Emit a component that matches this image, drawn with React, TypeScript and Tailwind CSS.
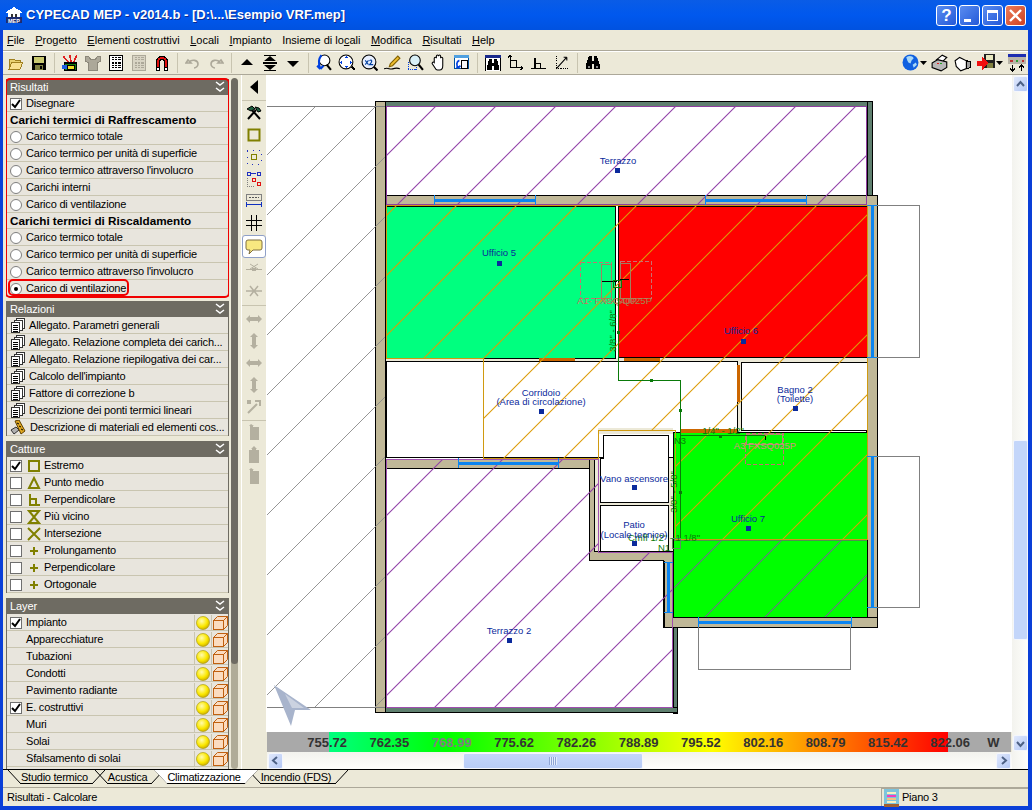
import type { ReactNode } from "react";

const FONT = "font-['Liberation_Sans',Arial,sans-serif]";

// 16x16 pixel-ish icon wrapper
const Ic = ({ children, size = 16, className = "" }: { children: ReactNode; size?: number; className?: string }) => (
  <svg width={size} height={size} viewBox="0 0 16 16" className={className} shapeRendering="crispEdges">
    {children}
  </svg>
);

const Folder = () => (
  <Ic>
    <path d="M1 4h5l1 1h5v2H4L1 13z" fill="#e8d070" stroke="#a08020" />
    <path d="M1 14l3-7h11l-3 7z" fill="#f8e090" stroke="#a08020" />
  </Ic>
);
const Save = () => (
  <Ic>
    <rect x="1" y="1" width="14" height="14" fill="#000" />
    <rect x="3" y="2" width="10" height="6" fill="#c8c870" />
    <rect x="4" y="10" width="8" height="5" fill="#808040" />
    <rect x="9" y="11" width="2" height="3" fill="#000" />
  </Ic>
);
const ToolSet = () => (
  <Ic size={18}>
    <path d="M2 2l5 6M8 1l1 7M14 1l-3 7" stroke="#e02020" strokeWidth="1.5" />
    <rect x="3" y="8" width="11" height="7" fill="#108010" stroke="#000" />
    <rect x="6" y="10" width="6" height="4" fill="#f0e020" stroke="#000" />
    <rect x="1" y="10" width="4" height="3" fill="#2060e0" />
  </Ic>
);
const Shirt = () => (
  <Ic size={18}>
    <path d="M1 2l3 0 2 3 4 0 2-3 3 0 0 4-3 2 0 7-8 0 0-7-3-2z" fill="#aca899" stroke="#8c887a" />
  </Ic>
);
const Dxf = ({ dim = false }: { dim?: boolean }) => (
  <Ic size={18}>
    <rect x="2" y="1" width="12" height="14" fill={dim ? "#d8d4c4" : "#fff"} stroke={dim ? "#aca899" : "#000"} />
    <path d="M4 3h8M4 5h8M4 8h8M4 10h8M4 12h8" stroke={dim ? "#aca899" : "#000"} strokeDasharray="2 1" />
  </Ic>
);
const Magnet = () => (
  <Ic size={18}>
    <path d="M3 14V7a5 5 0 0 1 10 0v7h-3V7a2 2 0 0 0-4 0v7z" fill="#e01010" stroke="#000" />
    <rect x="3" y="12" width="3" height="3" fill="#fff" stroke="#000" />
    <rect x="10" y="12" width="3" height="3" fill="#fff" stroke="#000" />
  </Ic>
);
const Undo = ({ flip = false }: { flip?: boolean }) => (
  <Ic>
    <g transform={flip ? "matrix(-1 0 0 1 16 0)" : undefined}>
      <path d="M3 5l-2 3h5zM4 7c3-3 9-2 9 2 0 2-2 4-4 4" fill="none" stroke="#aca899" strokeWidth="1.6" shapeRendering="auto" />
    </g>
  </Ic>
);
const Up = () => <Ic><path d="M8 4l6 6H2z" fill="#000" shapeRendering="auto" /></Ic>;
const Down = () => <Ic><path d="M8 12L2 6h12z" fill="#000" shapeRendering="auto" /></Ic>;
const UpDown = () => (
  <Ic>
    <path d="M8 1l6 5H2zM8 15l-6-5h12z" fill="#000" shapeRendering="auto" />
    <path d="M1 7.500h14M1 8.500h14M2 0.500h12M2 15.500h12" stroke="#000" />
  </Ic>
);
const ZoomR = () => (
  <Ic size={17}>
    <circle cx="9" cy="6" r="5" fill="#fff" stroke="#000" shapeRendering="auto" />
    <path d="M11 10l4 5" stroke="#000" strokeWidth="2" shapeRendering="auto" />
    <path d="M6 1C3 5 3 9 5 14M5 14l-3-3M5 14l3-3" fill="none" stroke="#0040e0" strokeWidth="2" shapeRendering="auto" />
  </Ic>
);
const ZoomAll = () => (
  <Ic size={17}>
    <circle cx="7.500" cy="7.500" r="6.500" fill="#fff" stroke="#000" shapeRendering="auto" />
    <path d="M13 12l3 3" stroke="#000" strokeWidth="2" />
    <path d="M8 2l-2 2h4zM8 13l-2-2h4zM2 8l2-2v4zM13 8l-2-2v4z" fill="#0040e0" />
  </Ic>
);
const ZoomX2 = () => (
  <svg width={17} height={17} viewBox="0 0 16 16">
    <circle cx="7.500" cy="7.500" r="6.500" fill="#e8f0ff" stroke="#000" />
    <path d="M12 12l3.500 3.500" stroke="#000" strokeWidth="2" />
    <path d="M4 6l3 4M7 6l-3 4" stroke="#0040a0" />
    <path d="M8 6.500c2-2 3.500 0 0 3.500h3.500" fill="none" stroke="#0040a0" />
  </svg>
);
const Pencil = () => (
  <Ic size={17}>
    <path d="M6 9l7-7 2 2-7 7-3 1z" fill="#f0c030" stroke="#806000" shapeRendering="auto" />
    <path d="M0 14c4-2 5 1 8 0s5-1 7 0" fill="none" stroke="#000" shapeRendering="auto" />
  </Ic>
);
const ZoomDash = () => (
  <Ic size={17}>
    <rect x="1" y="8" width="8" height="7" fill="none" stroke="#0040e0" strokeDasharray="1 1" />
    <circle cx="7.500" cy="6" r="5" fill="#d8f0f8" stroke="#000" shapeRendering="auto" />
    <path d="M11 10l4 5" stroke="#000" strokeWidth="2" shapeRendering="auto" />
  </Ic>
);
const Hand = () => (
  <Ic size={17}>
    <path d="M4 8V4a1 1 0 0 1 2 0V2a1 1 0 0 1 2 0v0a1 1 0 0 1 2 0v2a1 1 0 0 1 2 0v7c0 2-1 4-3 4H7c-1 0-2-1-3-3L2 9c0-1 1-2 2-1z" fill="#fff" stroke="#000" shapeRendering="auto" />
  </Ic>
);
const PageArrow = () => (
  <Ic size={17}>
    <rect x="1" y="1" width="14" height="13" fill="#fff" stroke="#0050a0" />
    <rect x="1" y="1" width="14" height="3" fill="#50a0e0" />
    <rect x="8" y="6" width="6" height="8" fill="#f8f8f8" stroke="#000" />
    <path d="M6 6C3 7 3 11 5 13M5 13l-2-1M5 13l2-2" fill="none" stroke="#0040e0" strokeWidth="1.600" shapeRendering="auto" />
  </Ic>
);
const BinoBox = () => (
  <Ic>
    <rect x="0" y="0" width="16" height="16" fill="#fff" />
    <rect x="0" y="0" width="16" height="3" fill="#1a2a8c" />
    <path d="M4 4h3v4h2V4h3l2 8v3H9v-4H7v4H2v-3z" fill="#000" />
    <rect x="0" y="3" width="1" height="13" fill="#000" />
    <rect x="15" y="3" width="1" height="13" fill="#000" />
  </Ic>
);
const Axes = ({ kind }: { kind: number }) => (
  <Ic size={17}>
    {kind === 0 && <path d="M3 1v12h12M3 1l-2 2M3 1l2 2M15 13l-2-2M15 13l-2 2M3 6h6M9 6v7" fill="none" stroke="#000" />}
    {kind === 1 && <path d="M1 14h14M4 14V4h1v10M5 9h5v5" fill="none" stroke="#000" />}
    {kind === 2 && (
      <>
        <path d="M3 2v12M3 14h12" stroke="#000" strokeDasharray="1 1" fill="none" />
        <path d="M3 14L13 3M13 3h-3M13 3v3" stroke="#000" fill="none" shapeRendering="auto" />
      </>
    )}
  </Ic>
);
const Binoculars = () => (
  <Ic>
    <path d="M4 1h3v5h2V1h3l3 9v4H9V9H7v5H1v-4z" fill="#000" />
    <rect x="3" y="11" width="2" height="2" fill="#888" />
    <rect x="11" y="11" width="2" height="2" fill="#888" />
  </Ic>
);
const Globe = () => (
  <svg width={17} height={17} viewBox="0 0 16 16">
    <circle cx="8" cy="8" r="7.500" fill="#1060e0" />
    <path d="M4 3c3-2 6-1 7 1l-2 2-1 3-2-1-1-2zM10 10l3-2 1 2-3 3z" fill="#a8d8f8" />
  </svg>
);
const Caret = () => <svg width={7} height={4} viewBox="0 0 7 4"><path d="M0 0h7L3.500 4z" fill="#000" /></svg>;
const Printer = () => (
  <Ic size={18}>
    <path d="M5 5l5-4 4 2-4 4z" fill="#fff" stroke="#000" shapeRendering="auto" />
    <path d="M1 8l5-3 8 2v5l-5 3-8-3z" fill="#b8b8b8" stroke="#000" shapeRendering="auto" />
    <rect x="5" y="8" width="2" height="1" fill="#e02020" />
    <rect x="8" y="8" width="2" height="1" fill="#20a020" />
  </Ic>
);
const Camera = () => (
  <Ic size={18}>
    <path d="M1 6l4-3 6 3 0 7-5 2-4-4z" fill="#fff" stroke="#000" shapeRendering="auto" />
    <path d="M11 6l4 1v5l-4 1z" fill="#a0a0a0" stroke="#000" />
  </Ic>
);
const DiskArrow = () => (
  <Ic size={18}>
    <rect x="6" y="0" width="10" height="12" fill="#202020" />
    <rect x="8" y="1" width="6" height="4" fill="#e8e8c0" />
    <rect x="9" y="8" width="5" height="4" fill="#808040" />
    <path d="M0 6h4V2l6 6-6 7v-4H0z" fill="#f01010" />
  </Ic>
);
const PanelIc = () => (
  <Ic size={18}>
    <rect x="0" y="0" width="16" height="3" fill="#1c2cb0" />
    <rect x="0" y="3" width="16" height="6" fill="#b8b4a8" />
    <rect x="2" y="5" width="2" height="2" fill="#c03030" />
    <rect x="7" y="5" width="2" height="2" fill="#30a030" />
    <rect x="12" y="5" width="2" height="2" fill="#c03030" />
    <path d="M4 10v5M2 13l2 2 2-2M12 15v-5M10 12l2-2 2 2" fill="none" stroke="#000" />
  </Ic>
);

const Sep = () => <div className="w-[8px] h-[20px] flex justify-center"><div className="w-px h-full bg-[#c8c4b0]" /></div>;
const Btn = ({ children }: { children: ReactNode }) => (
  <div className="w-[23px] h-[22px] flex items-center justify-center">{children}</div>
);

const menuItems: [string, string, string][] = [
  ["", "F", "ile"],
  ["", "P", "rogetto"],
  ["", "E", "lementi costruttivi"],
  ["", "L", "ocali"],
  ["", "I", "mpianto"],
  ["Insieme di lo", "c", "ali"],
  ["", "M", "odifica"],
  ["", "R", "isultati"],
  ["", "H", "elp"],
];

const Chevrons = () => (
  <svg width={10} height={12} viewBox="0 0 10 12">
    <path d="M1 1l4 3 4-3M1 7l4 3 4-3" fill="none" stroke="#fff" strokeWidth="1.500" />
  </svg>
);

const Check = ({ on = false }: { on?: boolean }) => (
  <div className="w-[12px] h-[12px] border border-[#6f6f6f] bg-white flex items-center justify-center shrink-0">
    {on && (
      <svg width={10} height={10} viewBox="0 0 10 10">
        <path d="M1 5l3 3 5-7" fill="none" stroke="#000" strokeWidth="2" />
      </svg>
    )}
  </div>
);
const Radio = ({ on = false }: { on?: boolean }) => (
  <div className="w-[12px] h-[12px] rounded-full border border-[#7f7f7f] bg-white flex items-center justify-center shrink-0">
    {on && <div className="w-[4px] h-[4px] rounded-full bg-black" />}
  </div>
);

const Header = ({ title }: { title: string }) => (
  <div className="h-[16px] bg-[#6e6b62] flex items-center justify-between pl-[4px] pr-[4px] text-white text-[11px] tracking-[-0.1px] leading-none">
    <span className="pt-[1px]">{title}</span>
    <Chevrons />
  </div>
);

const Row = ({ children, h = "h-[17px]" }: { children: ReactNode; h?: string }) => (
  <div className={`${h} flex items-center bg-[#e8e5dd] border-b border-[#c9c5b0] text-[11px] tracking-[-0.2px] leading-none text-black whitespace-nowrap overflow-hidden pt-[1px]`}>
    {children}
  </div>
);

const Doc = () => (
  <svg width={14} height={15} viewBox="0 0 14 15" shapeRendering="crispEdges" className="shrink-0">
    <rect x="5" y="0.500" width="8" height="10" fill="#fff" stroke="#333" />
    <rect x="3" y="2.500" width="8" height="10" fill="#fff" stroke="#333" />
    <rect x="0.500" y="4.500" width="8" height="10" fill="#fff" stroke="#333" />
    <path d="M2 7h5M2 9h5M2 11h5M2 13h5" stroke="#000" />
  </svg>
);
const Books = () => (
  <svg width={16} height={15} viewBox="0 0 16 15" className="shrink-0">
    <path d="M1 10l5-3 3 3-5 4z" fill="#b0b0b0" stroke="#333" />
    <path d="M5 1l4-1 6 11-4 3z" fill="#e0a820" stroke="#604000" />
    <path d="M7 3l2 1M9 6l2 1M11 9l2 1" stroke="#000" />
  </svg>
);

const snapIcons: Record<string, ReactNode> = {
  square: <rect x="2" y="2" width="10" height="10" fill="none" stroke="#808000" strokeWidth="2" />,
  tri: <path d="M7 2l5 10H2z" fill="none" stroke="#808000" strokeWidth="2" />,
  perp: <path d="M3 1v11h10M3 6h6v6" fill="none" stroke="#808000" strokeWidth="2" />,
  hour: <path d="M2 1h10L2 13h10z" fill="none" stroke="#808000" strokeWidth="2" />,
  x: <path d="M1 1l12 12M13 1L1 13" fill="none" stroke="#808000" strokeWidth="2" />,
  plus: <path d="M7 3v8M3 7h8" fill="none" stroke="#808000" strokeWidth="2" />,
};
const catture: [string, string, boolean][] = [
  ["Estremo", "square", true],
  ["Punto medio", "tri", false],
  ["Perpendicolare", "perp", false],
  ["Più vicino", "hour", false],
  ["Intersezione", "x", false],
  ["Prolungamento", "plus", false],
  ["Perpendicolare", "plus", false],
  ["Ortogonale", "plus", false],
];
const relazioni = [
  "Allegato. Parametri generali",
  "Allegato. Relazione completa dei carich...",
  "Allegato. Relazione riepilogativa dei car...",
  "Calcolo dell'impianto",
  "Fattore di correzione b",
  "Descrizione dei ponti termici lineari",
];
const layers: [string, boolean][] = [
  ["Impianto", true],
  ["Apparecchiature", false],
  ["Tubazioni", false],
  ["Condotti", false],
  ["Pavimento radiante", false],
  ["E. costruttivi", true],
  ["Muri", false],
  ["Solai", false],
  ["Sfalsamento di solai", false],
  ["", false],
];

const Sun = () => (
  <svg width={14} height={14} viewBox="0 0 14 14">
    <defs>
      <radialGradient id="sun" cx="0.4" cy="0.35" r="0.7">
        <stop offset="0" stopColor="#fffbb0" />
        <stop offset="0.6" stopColor="#fbe800" />
        <stop offset="1" stopColor="#c8a800" />
      </radialGradient>
    </defs>
    <circle cx="7" cy="7" r="6.500" fill="url(#sun)" stroke="#a09000" strokeWidth="0.6" />
  </svg>
);
const Cube = () => (
  <svg width={15} height={14} viewBox="0 0 15 14" shapeRendering="crispEdges">
    <path d="M0.500 4.500l4-4h10l-4 4z" fill="#fbdcc0" stroke="#c06010" shapeRendering="auto" />
    <path d="M10.500 4.500l4-4v9l-4 4z" fill="#fbdcc0" stroke="#c06010" shapeRendering="auto" />
    <rect x="0.500" y="4.500" width="10" height="9" fill="#fbdcc0" stroke="#c06010" />
  </svg>
);

const VIc = ({ children }: { children: ReactNode }) => (
  <div className="h-[22px] flex items-center justify-center">{children}</div>
);
const VSep = ({ h = "h-[4px]" }: { h?: string }) => (
  <div className={`${h} flex items-center`}><div className="w-full h-px bg-[#c8c4b0]" /></div>
);
const GreyArrow = ({ v = false }: { v?: boolean }) => (
  <svg width={18} height={18} viewBox="0 0 18 18">
    <path
      d={v ? "M9 1l4 4h-2v8h2l-4 4-4-4h2V5H5z" : "M1 9l4-4v2h8V5l4 4-4 4v-2H5v2z"}
      fill="#b4b0a0"
    />
  </svg>
);
const GreyBlock = ({ tall = false }: { tall?: boolean }) => (
  <svg width={14} height={18} viewBox="0 0 14 18">
    <path d={tall ? "M7 0l3 3H9v1h3v13H2V4h3V3H4z" : "M4 0L2 2h1v14h9V3H6V2h1z"} fill="#b4b0a0" />
  </svg>
);

// diagonal hatch shared by all areas of the plan
const hatch = Array.from({ length: 34 }, (_, i) => 302 + 60 * i);
const Hatch = ({ clip, color, w = 1.1 }: { clip: string; color: string; w?: number }) => (
  <g clipPath={`url(#${clip})`} stroke={color} strokeWidth={w} shapeRendering="geometricPrecision">
    {hatch.map((c) => (
      <line key={c} x1={c - 760} y1={760} x2={c} y2={0} />
    ))}
  </g>
);

const TAN = "#c0b898";
const DARK = "#5f7f6f";
const CREAM = "#ece9d8";
const BLUE = "#0a84f0";
const LABEL = "#0b2a9c";
const PIPE = "#0a7a0a";

const Mark = ({ x, y }: { x: number; y: number }) => <rect x={x - 2.500} y={y - 2.500} width="5" height="5" fill="#0b2a9c" />;
const Lbl = ({ x, y, t, c = LABEL, a = "middle" }: { x: number; y: number; t: string; c?: string; a?: "middle" | "start" | "end" }) => (
  <text x={x} y={y + 1} textAnchor={a} fill={c} fontSize="9.500" fontFamily="Liberation Sans">{t}</text>
);
const WinH = ({ x1, x2, y }: { x1: number; x2: number; y: number }) => (
  <g>
    <rect x={x1} y={y - 1.500} width={x2 - x1} height="3" fill={BLUE} />
    <path d={`M${x1} ${y - 5}v10M${x2} ${y - 5}v10`} stroke={BLUE} />
  </g>
);
const WinV = ({ y1, y2, x, x1, x2 }: { y1: number; y2: number; x: number; x1: number; x2: number }) => (
  <g>
    <rect x={x - 1.500} y={y1} width="3" height={y2 - y1} fill={BLUE} />
    <path d={`M${x1} ${y1}h${x2 - x1}M${x1} ${y2}h${x2 - x1}`} stroke={BLUE} />
  </g>
);

const Plan = () => (
  <svg width={746} height={657} viewBox="266 75 746 657" className="block bg-white" shapeRendering="crispEdges">
    <defs>
      <clipPath id="out"><rect x="267" y="107" width="118" height="600" /></clipPath>
      <clipPath id="t1"><rect x="386" y="107" width="481" height="98" /></clipPath>
      <clipPath id="t2"><path d="M386 459H598V552H672V707H386z" /></clipPath>
      <clipPath id="rooms"><path d="M386 205H867V539H675V430H598V458H483V358H386z" /></clipPath>
      <clipPath id="u7"><rect x="674" y="540" width="193" height="77" /></clipPath>
    </defs>

    {/* outside guide lines */}
    <path d="M267 106.500H385M267 707.500H385M385.500 107V707" stroke="#808080" fill="none" />
    <rect x="375.500" y="101.500" width="10" height="611" fill={TAN} stroke="#000" />
    <Hatch clip="out" color="#8a8a8a" w={0.9} />
    <path d="M267 106.500H385M267 707.500H385" stroke="#808080" fill="none" />

    {/* walls */}
    <rect x="385.500" y="101.500" width="487" height="5" fill={DARK} stroke="#000" />
    <rect x="867" y="101.500" width="5.500" height="94" fill={DARK} stroke="#000" />
    <rect x="386" y="106" width="481" height="89" fill="#fff" />
    <rect x="385.500" y="195.500" width="491.500" height="10" fill={TAN} stroke="#000" />
    <rect x="866.500" y="195.500" width="10.500" height="431.500" fill={TAN} stroke="#000" />
    <rect x="663.500" y="617.500" width="213.500" height="9.500" fill={TAN} stroke="#000" />
    <rect x="385.500" y="458.500" width="214" height="9.500" fill={TAN} />
    <rect x="589.500" y="458.500" width="10" height="102" fill={TAN} stroke="#000" />
    <rect x="589.500" y="552" width="84" height="9" fill={TAN} />
    <path d="M589.500 561H664V617" fill="none" stroke="#000" />
    <rect x="664" y="561" width="9.500" height="66" fill={TAN} />
    <path d="M664 561V627" fill="none" stroke="#000" />
    <rect x="673" y="627" width="4" height="86" fill={DARK} stroke="#000" />
    <rect x="385.500" y="707.500" width="291.500" height="5" fill={DARK} stroke="#000" />
    <path d="M386 468H589.500V560.500H663.500V627H672V707.500H386z" fill="#fff" stroke="#000" />

    {/* cream partition strips */}
    <rect x="386" y="357.500" width="481" height="4" fill={CREAM} />
    <rect x="737" y="361" width="4.500" height="71" fill={CREAM} />
    <rect x="594.500" y="427.500" width="82.500" height="124" fill={CREAM} stroke="#000" />

    {/* rooms */}
    <rect x="386" y="206" width="229" height="152" fill="#00ff7f" stroke="#000" />
    <rect x="618.500" y="206" width="248.500" height="151" fill="#ff0000" stroke="#000" />
    <rect x="386" y="361.500" width="351" height="96" fill="#fff" stroke="#000" />
    <rect x="741.500" y="362" width="125.500" height="68" fill="#fff" stroke="#000" />
    <rect x="673.500" y="432.500" width="193.500" height="184.500" fill="#00ff00" stroke="#000" />
    <rect x="598" y="428" width="75" height="6" fill={CREAM} />

    {/* brown segments */}
    <path d="M539 359.500H575M624 359.500H660" stroke="#cc6600" strokeWidth="3" fill="none" />
    <rect x="737" y="365" width="3" height="37" fill="#cc6600" />
    <rect x="680" y="429" width="57" height="4" fill="#cc6600" />

    {/* hatches */}
    <Hatch clip="t1" color="#9040a8" />
    <Hatch clip="t2" color="#9040a8" />
    <path d="M600.500 458H603.500V435.500H668.500V502.500H600.500z" fill="#fff" stroke="#000" />
    <rect x="600.500" y="505.500" width="68" height="46" fill="#fff" stroke="#000" />
    <Hatch clip="rooms" color="#dc9c08" />
    <Hatch clip="u7" color="#70708a" />

    {/* area outlines */}
    <path d="M386.500 205V106.500H866.500V204.500H386" fill="none" stroke="#8f3fa0" />
    <path d="M386.500 459.500H598.500V552.500H672.500V707.500H386.500z" fill="none" stroke="#a050b0" />
    <path d="M386.500 205.500H867.500V539.500H675.500V430.500H598.500V458.500H483.500V358.500H386.500z" fill="none" stroke="#d09a10" />
    <path d="M674 540.500H867" stroke="#4f8f4f" />

    {/* windows */}
    <WinH x1={458} x2={558} y={463} />
    <WinH x1={705} x2={806} y={200} />
    <WinH x1={434} x2={535} y={200} />
    <WinH x1={698} x2={851} y={622} />
    <WinV y1={205} y2={357} x={872} x1={867} x2={877} />
    <WinV y1={456} y2={607} x={872} x1={867} x2={877} />
    <WinV y1={562} y2={612} x={668} x1={664} x2={673} />
    <path d="M877 205.500H919.500V357.500H877M877 456.500H919.500V607.500H877M698.500 627V669.500H850.500V627" fill="none" stroke="#808080" />

    {/* units */}
    <g fill="none" stroke="#c87070">
      <rect x="580.500" y="262.500" width="31" height="36" strokeDasharray="4 2" />
      <rect x="620.500" y="261.500" width="31" height="37" strokeDasharray="4 2" />
      <rect x="745.500" y="433.500" width="38" height="31" strokeDasharray="4 2" />
    </g>
    <g fill="none" stroke="#a08060">
      <rect x="601.500" y="264.500" width="10" height="34" />
      <rect x="620.500" y="263.500" width="10" height="35" />
      <rect x="746.500" y="434" width="36" height="10" stroke="#b09070" />
    </g>
    <Lbl x={577} y={303} t="A1- FXSQ40P" c="#c87060" a="start" />
    <Lbl x={652} y={303} t="FXSQ025P" c="#a08a50" a="end" />
    <Lbl x={765} y={448} t="A3  FXSQ025P" c="#d89080" />

    {/* pipes */}
    <path d="M602 281.500H617M620 279.500H629M765.500 436V440" stroke="#000" fill="none" />
    <path d="M618.500 284V380.500H680.500V540M680 435.500H765" stroke={PIPE} fill="none" />
    <rect x="613.500" y="280.500" width="8" height="7" fill="none" stroke={PIPE} />
    <rect x="672.500" y="538.500" width="8" height="10" fill="none" stroke="#5f8f5f" />
    {[[618, 332], [651, 380], [680, 410], [720, 436], [680, 492]].map(([x, y]) => (
      <rect key={`${x}${y}`} x={x - 1.500} y={y - 1.500} width="3" height="3" fill={PIPE} />
    ))}
    <g fill={PIPE} fontSize="9.500" fontFamily="Liberation Sans">
      <text transform="rotate(-90 616 331)" x="616" y="331" textAnchor="middle">3/8" - 6/8"</text>
      <text transform="rotate(-90 677 492)" x="677" y="492" textAnchor="middle">3/8" - 5/8"</text>
      <text x="723" y="434" textAnchor="middle">1/4" - 1/2"</text>
      <text x="680" y="444" textAnchor="middle">N3</text>
      <text x="664" y="541" textAnchor="middle">Cmff 1/2" - 1 1/8"</text>
      <text x="664" y="551" textAnchor="middle">N1</text>
    </g>

    {/* room labels */}
    <Lbl x={618} y={163} t="Terrazzo" /><Mark x={617} y={170} />
    <Lbl x={499} y={255} t="Ufficio 5" /><Mark x={499} y={263} />
    <Lbl x={741} y={333} t="Ufficio 6" /><Mark x={743} y={341} />
    <Lbl x={541} y={395} t="Corridoio" /><Lbl x={541} y={404} t="(Area di circolazione)" /><Mark x={541} y={411} />
    <Lbl x={795} y={392} t="Bagno 2" /><Lbl x={795} y={401} t="(Toilette)" /><Mark x={795} y={408} />
    <Lbl x={634} y={481} t="Vano ascensore" /><Mark x={634} y={487} />
    <Lbl x={634} y={527} t="Patio" /><Lbl x={634} y={537} t="(Locale tecnico)" /><Mark x={634} y={543} />
    <Lbl x={748} y={521} t="Ufficio 7" /><Mark x={748} y={528} />
    <Lbl x={509} y={633} t="Terrazzo 2" /><Mark x={509} y={640} />

    {/* north arrow */}
    <path d="M274 685L311 710H295L291 726z" fill="#a8b4cc" shapeRendering="auto" />
    <path d="M285 694L304 708H292z" fill="#fff" opacity="0.4" shapeRendering="auto" />
  </svg>
);

const barLabels = ["755.72", "762.35", "768.99", "775.62", "782.26", "788.89", "795.52", "802.16", "808.79", "815.42", "822.06"];

const ScrollBtn = ({ d }: { d: string }) => (
  <div className="w-[15px] h-[16px] rounded-[2px] bg-gradient-to-br from-[#e0e8fc] to-[#b4c8f4] border border-[#f4f6fc] flex items-center justify-center shrink-0">
    <svg width={9} height={9} viewBox="0 0 9 9"><path d={d} fill="none" stroke="#4d6185" strokeWidth="2" /></svg>
  </div>
);

const Slant = ({ dir }: { dir: "l" | "r" }) => (
  <svg width={13} height={14} viewBox="0 0 13 14" className="shrink-0 block">
    <line x1="0" y1={dir === "l" ? 0 : 14} x2="13" y2={dir === "l" ? 14 : 0} stroke="#000" />
  </svg>
);
const Tab = ({ t, active = false }: { t: string; active?: boolean }) => (
  <div
    className={`flex h-[14px] -ml-[10px] first:ml-0 ${active ? "bg-white [clip-path:polygon(0_0,100%_0,calc(100%-13px)_100%,13px_100%)] z-10" : ""}`}
  >
    <Slant dir="l" />
    <span className="pr-[4px] border-b border-black text-[11px] tracking-[-0.25px] leading-[14px] text-black whitespace-nowrap h-[14px]">{t}</span>
    <Slant dir="r" />
  </div>
);

export default function App() {
  return (
    <div className={`${FONT} w-[1032px] h-[810px] overflow-hidden flex flex-col bg-[#0a3fd8]`}>
      {/* Title bar */}
      <div className="h-[30px] shrink-0 flex items-center pl-[6px] pr-[6px] bg-gradient-to-b from-[#0a5ce6] via-[#0058ee] to-[#0052e0]">
        <svg width={16} height={16} viewBox="0 0 16 16" shapeRendering="crispEdges" className="mr-[4px]">
          <path d="M8 0L0 5v1h16V5z" fill="#fff" />
          <rect x="2" y="6" width="12" height="4" fill="#fff" />
          <rect x="5" y="7" width="2" height="3" fill="#333" />
          <rect x="9" y="7" width="2" height="3" fill="#333" />
          <rect x="0" y="10" width="16" height="6" fill="#1c2c70" />
          <text x="8" y="15.500" textAnchor="middle" fill="#fff" fontSize="5.500" fontWeight="bold" fontFamily="Liberation Sans">MEP</text>
        </svg>
        <span className="text-white font-bold text-[13px] [text-shadow:1px_1px_0_#0a2a90]">
          {"CYPECAD MEP - v2014.b - [D:\\...\\Esempio VRF.mep]"}
        </span>
        <div className="ml-auto flex gap-[2px]">
          <div className="w-[21px] h-[21px] rounded-[3px] border border-white bg-gradient-to-br from-[#5a8cf0] to-[#2458d8] flex items-center justify-center text-white font-bold text-[17px] leading-none">?</div>
          <div className="w-[21px] h-[21px] rounded-[3px] border border-white bg-gradient-to-br from-[#5a8cf0] to-[#2458d8] flex items-end pb-[3px] pl-[4px]">
            <div className="w-[7px] h-[3px] bg-white" />
          </div>
          <div className="w-[21px] h-[21px] rounded-[3px] border border-white bg-gradient-to-br from-[#5a8cf0] to-[#2458d8] flex items-center justify-center">
            <div className="w-[11px] h-[11px] border border-white border-t-[3px]" />
          </div>
          <div className="w-[21px] h-[21px] rounded-[3px] border border-white bg-gradient-to-br from-[#ec7a58] to-[#cc4020] flex items-center justify-center">
            <svg width={13} height={13} viewBox="0 0 13 13"><path d="M1 1l11 11M12 1L1 12" stroke="#fff" strokeWidth="2.400" /></svg>
          </div>
        </div>
      </div>

      <div className="flex-1 min-h-0 ml-[3px] mr-[4px] mb-[4px] flex flex-col bg-[#ece9d8]">
        {/* Menu */}
        <div className="h-[20px] shrink-0 flex items-center gap-[10.5px] pl-[4px] pt-[1px] text-[11px] text-black">
          {menuItems.map(([a, u, b]) => (
            <span key={a + u + b} className="whitespace-nowrap">
              {a}
              <span className="underline">{u}</span>
              {b}
            </span>
          ))}
        </div>

        {/* Toolbar */}
        <div className="h-[25px] shrink-0 flex items-center pl-[1px] pr-[2px] border-t border-t-[#aca899] border-b border-b-[#aca899] shadow-[inset_0_1px_0_#fff]">
          <Btn><Folder /></Btn><Btn><Save /></Btn><Sep />
          <Btn><ToolSet /></Btn><Btn><Shirt /></Btn><Btn><Dxf /></Btn><Btn><Dxf dim /></Btn><Btn><Magnet /></Btn><Sep />
          <Btn><Undo /></Btn><Btn><Undo flip /></Btn><Sep />
          <Btn><Up /></Btn><Btn><UpDown /></Btn><Btn><Down /></Btn><Sep />
          <Btn><ZoomR /></Btn><Btn><ZoomAll /></Btn><Btn><ZoomX2 /></Btn><Btn><Pencil /></Btn><Btn><ZoomDash /></Btn><Btn><Hand /></Btn><Btn><PageArrow /></Btn><Sep />
          <Btn><BinoBox /></Btn><Btn><Axes kind={0} /></Btn><Btn><Axes kind={1} /></Btn><Btn><Axes kind={2} /></Btn><Sep />
          <Btn><Binoculars /></Btn>
          <div className="ml-auto flex items-center">
            <Globe />
            <div className="ml-[1px] mr-[4px]"><Caret /></div>
            <Printer />
            <div className="w-[5px]" />
            <Camera />
            <div className="w-[5px]" />
            <DiskArrow />
            <div className="ml-[1px] mr-[5px]"><Caret /></div>
            <PanelIc />
          </div>
        </div>

        {/* Main area */}
        <div className="flex-1 min-h-0 flex overflow-hidden">
          {/* Side panels */}
          <div className="w-[223px] ml-[3px] pt-[4px] shrink-0 flex flex-col overflow-hidden">
            <div className="relative">
              <Header title="Risultati" />
              <Row><div className="ml-[4px] mr-[4px]"><Check on /></div>Disegnare</Row>
              <Row h="h-[16px]"><span className="ml-[4px] font-bold text-[11.7px] tracking-normal">Carichi termici di Raffrescamento</span></Row>
              {["Carico termico totale", "Carico termico per unità di superficie", "Carico termico attraverso l'involucro", "Carichi interni", "Carico di ventilazione"].map((t) => (
                <Row key={t}><div className="ml-[4px] mr-[4px]"><Radio /></div>{t}</Row>
              ))}
              <Row h="h-[16px]"><span className="ml-[4px] font-bold text-[11.7px] tracking-normal">Carichi termici di Riscaldamento</span></Row>
              {["Carico termico totale", "Carico termico per unità di superficie", "Carico termico attraverso l'involucro"].map((t) => (
                <Row key={t + "2"}><div className="ml-[4px] mr-[4px]"><Radio /></div>{t}</Row>
              ))}
              <Row><div className="ml-[4px] mr-[4px]"><Radio on /></div>Carico di ventilazione</Row>
              <div className="absolute inset-x-[-1px] top-[-1px] bottom-[-1px] rounded-[5px] border-2 border-[#f00000]" />
              <div className="absolute left-[2px] bottom-[1px] w-[121px] h-[17px] rounded-[5px] border-2 border-[#f00000]" />
            </div>

            <div className="mt-[4px]">
              <Header title="Relazioni" />
              <div className="border-x border-[#6e6b62]">
                {relazioni.map((t) => (
                  <Row key={t}><div className="ml-[4px] mr-[4px]"><Doc /></div>{t}</Row>
                ))}
                <Row><div className="ml-[3px] mr-[4px]"><Books /></div>Descrizione di materiali ed elementi cos...</Row>
              </div>
            </div>

            <div className="mt-[5px]">
              <Header title="Catture" />
              <div className="border-x border-[#6e6b62]">
                {catture.map(([t, ic, on]) => (
                  <Row key={t + ic}>
                    <div className="ml-[3px] mr-[5px]"><Check on={on} /></div>
                    <svg width={14} height={14} viewBox="0 0 14 14" className="mr-[3px] shrink-0">{snapIcons[ic]}</svg>
                    {t}
                  </Row>
                ))}
              </div>
            </div>

            <div className="mt-[5px]">
              <Header title="Layer" />
              <div className="border-x border-[#6e6b62]">
                {layers.map(([t, on], i) => (
                  <Row key={t + i}>
                    {on && <div className="ml-[3px] mr-[4px]"><Check on /></div>}
                    <span className={on ? "" : "ml-[19px]"}>{t}</span>
                    <div className="ml-auto flex h-full">
                      <div className="w-[17px] h-full border-l border-[#c9c5b0] flex items-center justify-center"><Sun /></div>
                      <div className="w-[17px] h-full border-l border-[#c9c5b0] flex items-center justify-center"><Cube /></div>
                    </div>
                  </Row>
                ))}
              </div>
            </div>
          </div>

          {/* Panel scrollbar */}
          <div className="w-[7px] ml-[2px] mt-[3px] shrink-0 rounded-full bg-[#b0ac98] overflow-hidden">
            <div className="h-[586px] rounded-full bg-[#6e6b62]" />
          </div>

          {/* Vertical toolbar */}
          <div className="w-[25px] ml-[3px] shrink-0 border-l border-white pt-[1px] flex flex-col">
            <VIc><svg width={10} height={14} viewBox="0 0 10 14"><path d="M9 0v14L1 7z" fill="#000" /></svg></VIc>
            <VSep />
            <VIc>
              <svg width={16} height={16} viewBox="0 0 16 16">
                <path d="M2 14L10 5M14 14L5 4" stroke="#000" strokeWidth="2" />
                <path d="M1 4l5-3 3 3-4 2zM9 2l4 1 2 3-3 1z" fill="#206040" stroke="#000" />
              </svg>
            </VIc>
            <VIc><svg width={14} height={14} viewBox="0 0 14 14"><rect x="1.500" y="1.500" width="11" height="11" fill="none" stroke="#808000" strokeWidth="2" /></svg></VIc>
            <VIc>
              <svg width={16} height={16} viewBox="0 0 16 16" shapeRendering="crispEdges">
                <rect x="1" y="1" width="14" height="14" fill="none" stroke="#2030c0" strokeDasharray="1 5" />
                <rect x="5.500" y="5.500" width="5" height="5" fill="none" stroke="#808000" />
              </svg>
            </VIc>
            <VIc>
              <svg width={16} height={16} viewBox="0 0 16 16" shapeRendering="crispEdges">
                <path d="M6 7h3v3H6zM11 11h3v3h-3z" fill="none" stroke="#e01010" />
                <path d="M1 1h3v3H1zM5 2h5M11 1h3v3h-3z" fill="none" stroke="#2030c0" />
                <path d="M1 7v8h8" stroke="#808080" strokeDasharray="1 1" fill="none" />
              </svg>
            </VIc>
            <VIc>
              <svg width={18} height={14} viewBox="0 0 18 14" shapeRendering="crispEdges">
                <rect x="1.500" y="0.500" width="15" height="6" fill="#ece9d8" stroke="#808080" />
                <path d="M4 3.500h10" stroke="#555" strokeDasharray="2 1" />
                <path d="M1 10.500h16M1.500 8v5M16.500 8v5" stroke="#1030c0" />
              </svg>
            </VIc>
            <VIc>
              <svg width={16} height={16} viewBox="0 0 16 16" shapeRendering="crispEdges">
                <path d="M0 5.500h16M0 10.500h16M5.500 0v16M10.500 0v16" stroke="#000" />
              </svg>
            </VIc>
            <div className="h-[23px] mt-[1px] rounded-[3px] border border-[#8fa0c8] bg-white flex items-center justify-center">
              <svg width={18} height={16} viewBox="0 0 18 16">
                <path d="M3 1h12a2 2 0 0 1 2 2v6a2 2 0 0 1-2 2H8l-4 4 1-4H3a2 2 0 0 1-2-2V3a2 2 0 0 1 2-2z" fill="#f8e880" stroke="#807040" />
              </svg>
            </div>
            <VIc>
              <svg width={16} height={14} viewBox="0 0 16 14"><path d="M0 7.500h16M4 2l8 5M12 2L4 7" stroke="#b4b0a0" /><rect x="6" y="6" width="4" height="3" fill="#b4b0a0" /></svg>
            </VIc>
            <VIc>
              <svg width={16} height={14} viewBox="0 0 16 14"><path d="M0 7h16M4 2l8 10M12 2L4 12" stroke="#b4b0a0" strokeWidth="1.500" /></svg>
            </VIc>
            <VSep h="h-[6px]" />
            <VIc><GreyArrow /></VIc>
            <VIc><GreyArrow v /></VIc>
            <VIc><GreyArrow /></VIc>
            <VIc><GreyArrow v /></VIc>
            <VIc>
              <svg width={16} height={16} viewBox="0 0 16 16"><path d="M2 14l4-4 5-5M9 2h5v5" fill="none" stroke="#b4b0a0" strokeWidth="2" /><rect x="1" y="1" width="4" height="4" fill="#b4b0a0" /></svg>
            </VIc>
            <VSep />
            <VIc><GreyBlock /></VIc>
            <VIc><GreyBlock tall /></VIc>
            <VIc><GreyBlock /></VIc>
          </div>

          {/* Canvas column */}
          <div className="flex-1 min-w-0 flex">
            <div className="w-[746px] shrink-0 flex flex-col">
              <Plan />
              <div className="h-[20px] ml-[1px] mr-[1px] flex items-center bg-[linear-gradient(to_right,#a9a9a9_62px,#00ff7f_62px,#00ff00_180px,#ffff00_445px,#ff0000_681px,#a9a9a9_681px)] text-[13px] font-bold text-[#333] leading-none">
                <div className="w-[29px]" />
                {barLabels.map((l, i) => (
                  <span key={l} className={`w-[62.3px] text-center shrink-0 ${i === 2 ? "text-[#808080]" : ""}`}>{l}</span>
                ))}
                <span className="ml-[6px]">W</span>
              </div>
              <div className="flex-1 ml-[1px] flex items-center pl-[1px] pr-[1px] bg-gradient-to-b from-[#f3f3ee] to-[#fefefb]">
                <ScrollBtn d="M6 1L2 4.500 6 8" />
                <div className="ml-[180px] w-[180px] h-[16px] rounded-[2px] bg-gradient-to-b from-[#c4d6fa] to-[#b8ccf6] border border-[#f4f6fc] flex items-center justify-center">
                  <div className="w-[8px] h-[8px] bg-[repeating-linear-gradient(to_right,#8ea4d4_0_1px,#e4ecfc_1px_2px)]" />
                </div>
                <div className="ml-auto"><ScrollBtn d="M3 1L7 4.500 3 8" /></div>
              </div>
            </div>
            {/* Vertical scrollbar */}
            <div className="flex-1 flex flex-col items-center pt-[1px] pb-[18px] bg-gradient-to-r from-[#f3f3ee] to-[#fefefb]">
              <ScrollBtn d="M1 6L4.500 2 8 6" />
              <div className="mt-[348px] w-[15px] h-[200px] rounded-[2px] bg-[#c4d6fa] border border-[#f4f6fc]" />
              <div className="mt-auto"><ScrollBtn d="M1 3L4.500 7 8 3" /></div>
            </div>
          </div>
        </div>

        {/* Tabs */}
        <div className="h-[18px] shrink-0 border-t border-black pl-[5px] flex items-start">
          <Tab t="Studio termico" />
          <Tab t="Acustica" />
          <Tab t="Climatizzazione" active />
          <Tab t="Incendio (FDS)" />
        </div>

        {/* Status bar */}
        <div className="h-[19px] shrink-0 flex border-t border-[#aca899] text-[11px] tracking-[-0.25px] text-black">
          <span className="pl-[4px] leading-[19px]">Risultati - Calcolare</span>
          <div className="ml-auto w-[147px] border-l border-t border-[#aca899] flex items-center pl-[2px] gap-[3px]">
            <svg width={15} height={18} viewBox="0 0 15 18" shapeRendering="crispEdges">
              <rect width="15" height="18" fill="#7ec4dc" />
              <rect x="3" y="3" width="9" height="2" fill="#f8f0c0" />
              <rect x="3" y="6" width="9" height="2" fill="#f040c0" />
              <rect x="3" y="9" width="9" height="2" fill="#f8c080" />
              <rect x="3" y="12" width="9" height="2" fill="#f8f0c0" />
              <rect y="15" width="15" height="3" fill="#a06030" />
            </svg>
            Piano 3
          </div>
        </div>
      </div>
    </div>
  );
}
